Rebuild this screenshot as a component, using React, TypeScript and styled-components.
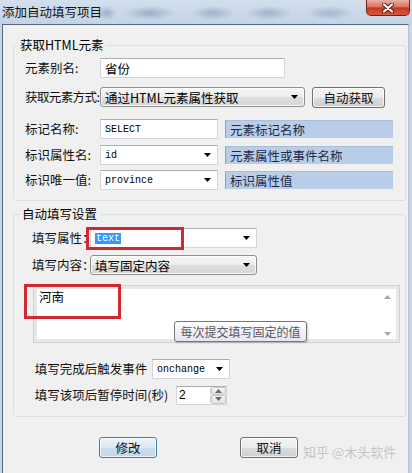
import React from "react";
import styled, { createGlobalStyle } from "styled-components";

const cjk = `"Noto Sans CJK SC", "Noto Sans", sans-serif`;
const mono = `"Liberation Mono", "DejaVu Sans Mono", monospace`;

const GlobalStyle = createGlobalStyle`
  html, body {
    margin: 0;
    padding: 0;
    background: #f0f0f0;
  }
  body {
    width: 412px;
    height: 473px;
    overflow: hidden;
    font-family: ${cjk};
    font-size: 12.5px;
    color: #000;
  }
`;

const Window = styled.div`
  width: 412px;
  height: 473px;
  display: flex;
  flex-direction: column;
  background: #c6d5e7;
`;

const TitleBar = styled.div`
  height: 24px;
  flex: none;
  display: flex;
  align-items: flex-start;
  background:
    radial-gradient(ellipse 10px 7px at 107px 13px, rgba(120, 138, 165, 0.55), transparent),
    radial-gradient(ellipse 26px 7px at 150px 13px, rgba(120, 138, 165, 0.55), transparent),
    radial-gradient(ellipse 22px 7px at 213px 13px, rgba(120, 138, 165, 0.5), transparent),
    radial-gradient(ellipse 23px 7px at 269px 13px, rgba(120, 138, 165, 0.5), transparent),
    radial-gradient(ellipse 24px 7px at 330px 13px, rgba(120, 138, 165, 0.45), transparent),
    linear-gradient(#d3dfed, #c3d3e6);
`;

const Title = styled.div`
  padding: 4px 0 0 2px;
  font-size: 12.5px;
  line-height: 16px;
  color: #111;
`;

const CloseButton = styled.div`
  margin-left: auto;
  margin-right: 2px;
  width: 44px;
  height: 16px;
  box-sizing: border-box;
  border: 1px solid #6e2619;
  border-top: none;
  border-radius: 0 0 5px 5px;
  background: linear-gradient(#eab0a2, #d9735f 45%, #c5391f 52%, #d35a3f);
  display: flex;
  align-items: center;
  justify-content: center;
`;

const Frame = styled.div`
  flex: 1;
  display: flex;
  padding: 0 3px 0 2px;
`;

const Body = styled.div`
  flex: 1;
  background: #f0f0f0;
  border-left: 1px solid #56687e;
  border-top: 1px solid #56687e;
  border-right: 1px solid #b5c2d1;
  padding: 12px 2px 0 10px;
`;

const Group = styled.fieldset<{ $pad: string; $top?: number }>`
  margin: ${(p) => p.$top ?? 0}px 0 0;
  padding: ${(p) => p.$pad};
  border: 1px solid #d5dfe5;
  border-radius: 3px;
  min-width: 0;
`;

const Legend = styled.legend<{ $ml: number }>`
  margin-left: ${(p) => p.$ml}px;
  padding: 0 2px;
  font-size: 12.5px;
  line-height: 16px;
`;

const Row = styled.div<{ $top?: number }>`
  position: relative;
  display: flex;
  align-items: center;
  height: 20px;
  margin-top: ${(p) => p.$top ?? 0}px;
`;

const Label = styled.span<{ $w: number; $tight?: boolean }>`
  flex: none;
  width: ${(p) => p.$w}px;
  white-space: nowrap;
  color: #111;
  line-height: 16px;
  letter-spacing: ${(p) => (p.$tight ? "-0.6px" : "0")};
`;

const TextBox = styled.div<{ $w: number; $mono?: boolean }>`
  box-sizing: border-box;
  width: ${(p) => p.$w}px;
  height: 20px;
  display: flex;
  align-items: center;
  padding: 0 4px;
  background: #fff;
  border: 1px solid #d2d5da;
  border-top-color: #abadb3;
  font-family: ${(p) => (p.$mono ? mono : cjk)};
  font-size: ${(p) => (p.$mono ? "10px" : "12.5px")};
`;

const Combo = styled(TextBox)`
  justify-content: space-between;
  padding-right: 6px;
`;

const DropList = styled.div<{ $w: number }>`
  box-sizing: border-box;
  width: ${(p) => p.$w}px;
  height: 20px;
  display: flex;
  align-items: center;
  justify-content: space-between;
  padding: 0 6px 0 4px;
  border: 1px solid #8e8f8f;
  border-radius: 3px;
  background: linear-gradient(#f7f7f7, #ececec 50%, #dedede 51%, #d6d6d6);
  box-shadow: inset 0 0 0 1px rgba(255, 255, 255, 0.8);
`;

const PushButton = styled.div<{ $w: number; $ml?: number; $focus?: boolean }>`
  box-sizing: border-box;
  width: ${(p) => p.$w}px;
  height: 21px;
  margin-left: ${(p) => p.$ml ?? 0}px;
  display: flex;
  align-items: center;
  justify-content: center;
  border: 1px solid ${(p) => (p.$focus ? "#3c7fb1" : "#707070")};
  border-radius: 3px;
  background: ${(p) =>
    p.$focus
      ? "linear-gradient(#eaf3fa, #dbe9f4 50%, #c9dded 51%, #c2d8ea)"
      : "linear-gradient(#f4f4f4, #ebebeb 50%, #dddddd 51%, #cfcfcf)"};
  box-shadow: inset 0 0 0 1px rgba(255, 255, 255, 0.7);
  color: #111;
`;

const HintBox = styled.div`
  box-sizing: border-box;
  width: 168px;
  height: 18px;
  margin-left: 7px;
  padding-left: 4px;
  display: flex;
  align-items: center;
  background: #b9cde8;
  border-left: 1px solid #8aa3c4;
  border-top: 1px solid #a9bedb;
  color: #1d2b48;
`;

const Selected = styled.span`
  background: #3399ff;
  color: #fff;
  padding: 0 1px;
  line-height: 11px;
`;

const RedMark = styled.div<{ $x: number; $y: number; $w: number; $h: number }>`
  position: absolute;
  left: ${(p) => p.$x}px;
  top: ${(p) => p.$y}px;
  width: ${(p) => p.$w}px;
  height: ${(p) => p.$h}px;
  box-sizing: border-box;
  border: 3px solid #cf2a31;
  pointer-events: none;
`;

const MemoFrame = styled.div`
  position: relative;
  box-sizing: border-box;
  width: 367px;
  height: 58px;
  margin: 10px 0 0 1px;
  padding: 3px;
  border: 1px solid #d3d3d3;
  background: #e8e8e8;
  display: flex;
`;

const MemoText = styled.div`
  flex: 1;
  background: #fff;
  padding: 0 2px;
  line-height: 16px;
`;

const ScrollBar = styled.div`
  width: 17px;
  background: #fff;
  display: flex;
  flex-direction: column;
  justify-content: space-between;
  align-items: center;
  padding: 6px 0 3px;
  box-sizing: border-box;
`;

const Tooltip = styled.div`
  position: absolute;
  left: 140px;
  top: 35px;
  width: 133px;
  height: 21px;
  box-sizing: border-box;
  display: flex;
  align-items: center;
  justify-content: center;
  border: 1px solid #767676;
  border-radius: 3px;
  background: linear-gradient(#ffffff, #e4e5f0);
  box-shadow: 1px 1px 2px rgba(0, 0, 0, 0.2);
  color: #575757;
  font-size: 12px;
`;

const Spin = styled.div`
  box-sizing: border-box;
  width: 51px;
  height: 19px;
  display: flex;
  background: #fff;
  border: 1px solid #d2d5da;
  border-top-color: #abadb3;
`;

const SpinValue = styled.div`
  flex: 1;
  padding-left: 2px;
  font-family: "Liberation Sans", sans-serif;
  font-size: 12px;
  line-height: 16px;
`;

const SpinButtons = styled.div`
  width: 15px;
  display: flex;
  flex-direction: column;
  border-left: 1px solid #d8d8d8;
`;

const SpinHalf = styled.div`
  flex: 1;
  display: flex;
  align-items: center;
  justify-content: center;
  background: linear-gradient(#f6f6f6, #e2e2e2);
  border: 1px solid #c8c8c8;
  border-radius: 2px;
`;

const ButtonRow = styled.div`
  display: flex;
  align-items: flex-start;
  margin-top: 20px;
  padding-left: 86px;
`;

const Watermark = styled.div`
  margin: 7px 0 0 5px;
  color: #c4c4c4;
  font-size: 13px;
  line-height: 16px;
  white-space: nowrap;
`;

const Arrow = ({ up, color = "#000" }: { up?: boolean; color?: string }) => (
  <svg width="7" height="4" viewBox="0 0 7 4">
    <path d={up ? "M0 4h7L3.5 0z" : "M0 0h7L3.5 4z"} fill={color} />
  </svg>
);

export default function App() {
  return (
    <>
      <GlobalStyle />
      <Window>
        <TitleBar>
          <Title>添加自动填写项目</Title>
          <CloseButton>
            <svg width="12" height="10" viewBox="0 0 12 10">
              <path d="M2 1.5l8 7M10 1.5l-8 7" stroke="#4a1a10" strokeWidth="4" strokeLinecap="round" />
              <path d="M2 1.5l8 7M10 1.5l-8 7" stroke="#fff" strokeWidth="2.2" strokeLinecap="round" />
            </svg>
          </CloseButton>
        </TitleBar>
        <Frame>
          <Body>
            <Group $pad="5px 0 10px 11px">
              <Legend $ml={-7}>获取HTML元素</Legend>
              <Row>
                <Label $w={75}>元素别名:</Label>
                <TextBox $w={185}>省份</TextBox>
              </Row>
              <Row $top={9}>
                <Label $w={75} $tight>
                  获取元素方式:
                </Label>
                <DropList $w={205}>
                  通过HTML元素属性获取
                  <Arrow />
                </DropList>
                <PushButton $w={73} $ml={7}>
                  自动获取
                </PushButton>
              </Row>
              <Row $top={12}>
                <Label $w={75}>标记名称:</Label>
                <TextBox $w={118} $mono>
                  SELECT
                </TextBox>
                <HintBox>元素标记名称</HintBox>
              </Row>
              <Row $top={6}>
                <Label $w={75}>标识属性名:</Label>
                <Combo $w={118} $mono>
                  id
                  <Arrow />
                </Combo>
                <HintBox>元素属性或事件名称</HintBox>
              </Row>
              <Row $top={5}>
                <Label $w={75}>标识唯一值:</Label>
                <Combo $w={118} $mono>
                  province
                  <Arrow />
                </Combo>
                <HintBox>标识属性值</HintBox>
              </Row>
            </Group>

            <Group $pad="6px 0 11px 18px" $top={5}>
              <Legend $ml={-12}>自动填写设置</Legend>
              <Row>
                <Label $w={58}>填写属性：</Label>
                <Combo $w={167} $mono>
                  <Selected>text</Selected>
                  <Arrow />
                </Combo>
                <RedMark $x={54} $y={-1} $w={98} $h={23} />
              </Row>
              <Row $top={7}>
                <Label $w={58}>填写内容：</Label>
                <DropList $w={167}>
                  填写固定内容
                  <Arrow />
                </DropList>
              </Row>
              <MemoFrame>
                <MemoText>河南</MemoText>
                <ScrollBar>
                  <Arrow up color="#a8a8a8" />
                  <Arrow color="#a8a8a8" />
                </ScrollBar>
                <RedMark $x={-10} $y={-2} $w={97} $h={35} />
                <Tooltip>每次提交填写固定的值</Tooltip>
              </MemoFrame>
              <Row $top={16}>
                <Label $w={120}>&nbsp;填写完成后触发事件</Label>
                <Combo $w={78} $mono>
                  onchange
                  <Arrow />
                </Combo>
              </Row>
              <Row $top={6}>
                <Label $w={144}>&nbsp;填写该项后暂停时间(秒)</Label>
                <Spin>
                  <SpinValue>2</SpinValue>
                  <SpinButtons>
                    <SpinHalf>
                      <Arrow up color="#6a6a6a" />
                    </SpinHalf>
                    <SpinHalf>
                      <Arrow color="#6a6a6a" />
                    </SpinHalf>
                  </SpinButtons>
                </Spin>
              </Row>
            </Group>

            <ButtonRow>
              <PushButton $w={58} $focus>
                修改
              </PushButton>
              <PushButton $w={58} $ml={83}>
                取消
              </PushButton>
              <Watermark>知乎 @木头软件</Watermark>
            </ButtonRow>
          </Body>
        </Frame>
      </Window>
    </>
  );
}
